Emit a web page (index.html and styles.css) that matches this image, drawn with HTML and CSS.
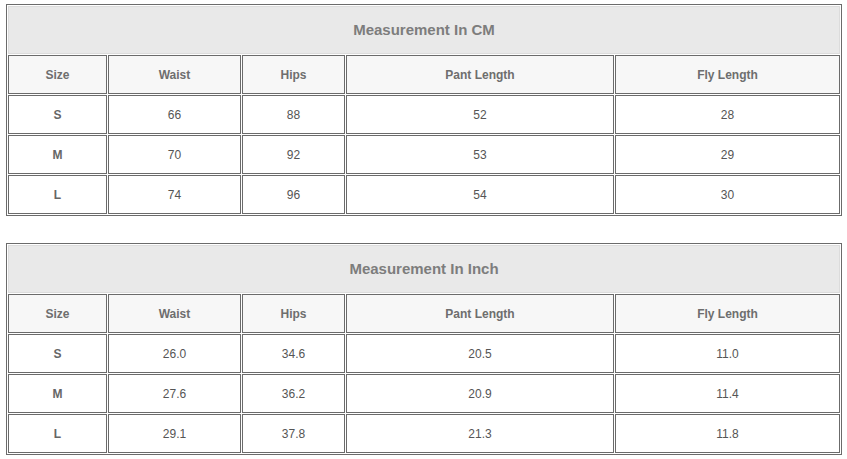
FILE: index.html
```html
<!DOCTYPE html>
<html>
<head>
<meta charset="utf-8">
<link rel="stylesheet" href="styles.css">
</head>
<body>
<div class="page">
  <table class="size-table">
    <colgroup>
      <col class="c-size"><col class="c-waist"><col class="c-hips"><col class="c-pant"><col class="c-fly">
    </colgroup>
    <tr><td class="title" colspan="5">Measurement In CM</td></tr>
    <tr class="head"><th>Size</th><th>Waist</th><th>Hips</th><th>Pant Length</th><th>Fly Length</th></tr>
    <tr><th class="sz">S</th><td>66</td><td>88</td><td>52</td><td>28</td></tr>
    <tr><th class="sz">M</th><td>70</td><td>92</td><td>53</td><td>29</td></tr>
    <tr><th class="sz">L</th><td>74</td><td>96</td><td>54</td><td>30</td></tr>
  </table>
  <table class="size-table">
    <colgroup>
      <col class="c-size"><col class="c-waist"><col class="c-hips"><col class="c-pant"><col class="c-fly">
    </colgroup>
    <tr><td class="title" colspan="5">Measurement In Inch</td></tr>
    <tr class="head"><th>Size</th><th>Waist</th><th>Hips</th><th>Pant Length</th><th>Fly Length</th></tr>
    <tr><th class="sz">S</th><td>26.0</td><td>34.6</td><td>20.5</td><td>11.0</td></tr>
    <tr><th class="sz">M</th><td>27.6</td><td>36.2</td><td>20.9</td><td>11.4</td></tr>
    <tr><th class="sz">L</th><td>29.1</td><td>37.8</td><td>21.3</td><td>11.8</td></tr>
  </table>
</div>
</body>
</html>
```
FILE: styles.css
```css
html, body {
  margin: 0;
  padding: 0;
  background: #fff;
}
.page {
  padding: 4px 6px 0 6px;
  display: flex;
  flex-direction: column;
  gap: 27px;
  font-family: "Liberation Sans", Arial, sans-serif;
}
.size-table {
  width: 836px;
  table-layout: fixed;
  border-collapse: separate;
  border-spacing: 1px;
  border: 1px solid #6b6b6b;
}
.c-size { width: 99px; }
.c-waist { width: 133px; }
.c-hips { width: 103px; }
.c-pant { width: 268px; }
.c-fly { width: 225px; }
.size-table td, .size-table th {
  box-sizing: border-box;
  border: 1px solid #6b6b6b;
  height: 39px;
  padding: 0;
  text-align: center;
  vertical-align: middle;
  font-size: 12px;
  color: #555;
  font-weight: normal;
}
.size-table td.title {
  height: 48px;
  padding-bottom: 2px;
  background: #e9e9e9;
  border: 1px solid #dcdcdc;
  font-size: 15px;
  font-weight: bold;
  color: #7d7d7d;
}
.size-table tr.head th {
  background: #f7f7f7;
  font-weight: bold;
  color: #6e6e6e;
}
.size-table th.sz {
  font-weight: bold;
  color: #666;
}
```
